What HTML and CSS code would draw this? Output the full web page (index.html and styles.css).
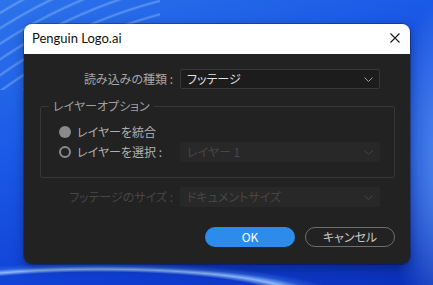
FILE: index.html
```html
<!DOCTYPE html>
<html lang="ja">
<head>
<meta charset="utf-8">
<link rel="stylesheet" href="styles.css">
</head>
<body>
<div class="desktop">
  <div class="dialog">
    <div class="titlebar">
      <span class="title">Penguin Logo.ai</span>
      <svg class="close" width="10" height="10" viewBox="0 0 10 10"><path d="M0.5 0.5 L9.5 9.5 M9.5 0.5 L0.5 9.5" stroke="#1a1a1a" stroke-width="1.1" fill="none"/></svg>
    </div>
    <div class="content">
      <div class="row">
        <span class="label">読み込みの種類 :</span>
        <div class="select">
          <span>フッテージ</span>
          <svg class="chev" width="9" height="5" viewBox="0 0 9 5"><path d="M0.5 0.5 L4.5 4.5 L8.5 0.5" stroke="#a0a0a0" stroke-width="1" fill="none"/></svg>
        </div>
      </div>
      <fieldset class="group">
        <legend>レイヤーオプション</legend>
        <div class="radio-row">
          <span class="radio filled"></span>
          <span class="rlabel">レイヤーを統合</span>
        </div>
        <div class="radio-row">
          <span class="radio ring"></span>
          <span class="rlabel wide">レイヤーを選択 :</span>
          <div class="select disabled">
            <span>レイヤー 1</span>
            <svg class="chev" width="9" height="5" viewBox="0 0 9 5"><path d="M0.5 0.5 L4.5 4.5 L8.5 0.5" stroke="#454545" stroke-width="1" fill="none"/></svg>
          </div>
        </div>
      </fieldset>
      <div class="row row3">
        <span class="label dim">フッテージのサイズ :</span>
        <div class="select disabled">
          <span>ドキュメントサイズ</span>
          <svg class="chev" width="9" height="5" viewBox="0 0 9 5"><path d="M0.5 0.5 L4.5 4.5 L8.5 0.5" stroke="#454545" stroke-width="1" fill="none"/></svg>
        </div>
      </div>
      <div class="buttons">
        <button class="btn ok">OK</button>
        <button class="btn cancel">キャンセル</button>
      </div>
    </div>
  </div>
</div>
</body>
</html>
```
FILE: styles.css
```css
html, body {
  margin: 0;
  padding: 0;
  width: 433px;
  height: 285px;
  overflow: hidden;
}
.desktop {
  width: 433px;
  height: 285px;
  padding: 24px 23px 0 24px;
  box-sizing: border-box;
  background:
    radial-gradient(ellipse 250px 36px at 100px 298px, rgba(120,180,255,0) 72%, rgba(160,205,255,0.85) 80%, rgba(80,140,240,0.35) 88%, rgba(80,140,240,0) 97%),
    radial-gradient(ellipse 90px 180px at 470px 165px, rgba(130,195,255,0.8), rgba(60,140,245,0) 100%),
    repeating-radial-gradient(circle at 284px 477px, rgba(255,255,255,0) 0px, rgba(255,255,255,0) 9px, rgba(170,210,255,0.4) 11px, rgba(255,255,255,0) 13px),
    linear-gradient(160deg, #2d73ea 0%, #1b5ae6 35%, #0f3fd4 70%, #0a2fb8 100%);
  background-size: 100% 100%, 100% 100%, 160px 90px, 100% 100%;
  background-repeat: no-repeat;
  font-family: "Noto Sans CJK JP", "Noto Sans", sans-serif;
}
.dialog {
  width: 386px;
  height: 240px;
  border-radius: 8px;
  overflow: hidden;
  display: flex;
  flex-direction: column;
  box-shadow: 0 0 0 1px rgba(0,0,0,0.25), 0 4px 12px rgba(0,0,0,0.35);
}
.titlebar {
  height: 30px;
  background: #ffffff;
  display: flex;
  align-items: center;
  justify-content: space-between;
  padding: 0 10px 0 8px;
  flex-shrink: 0;
}
.title {
  font-family: "Lato", "Noto Sans", sans-serif;
  font-size: 13px;
  color: #111;
  position: relative;
  top: -1px;
}
.close {
  display: block;
  position: relative;
  top: -1px;
}
.content {
  flex: 1;
  background: #222222;
  padding: 15px 15px 0 16px;
  font-size: 12px;
  font-feature-settings: "palt";
}
.row {
  display: flex;
  align-items: center;
  height: 20px;
}
.label {
  width: 133px;
  margin-right: 7px;
  text-align: right;
  color: #a6a6a6;
  white-space: nowrap;
  line-height: 20px;
}
.label.dim { color: #474747; }
.select {
  width: 200px;
  height: 20px;
  box-sizing: border-box;
  background: #1c1c1c;
  border: 1px solid #383838;
  border-radius: 2px;
  display: flex;
  align-items: center;
  justify-content: space-between;
  padding: 0 6px 0 6px;
  color: #e2e2e2;
  line-height: 18px;
}
.select .chev { display: block; margin-top: 1px; }
.select.disabled {
  background: #282828;
  border-color: #282828;
  color: #474747;
}
.group {
  margin: 10px 0 0 0;
  width: 355px;
  box-sizing: border-box;
  border: 1px solid #383838;
  border-radius: 2px;
  padding: 9px 14px 15px 18px;
}
.group legend {
  padding: 0 4px;
  margin-left: -10px;
  color: #a0a0a0;
  line-height: 14px;
}
.radio-row {
  display: flex;
  align-items: center;
  height: 20px;
}
.radio {
  width: 12px;
  height: 12px;
  border-radius: 50%;
  box-sizing: border-box;
  margin-right: 6px;
  flex-shrink: 0;
}
.radio.filled { background: #8a8a8a; }
.radio.ring { border: 2px solid #8a8a8a; background: #232323; }
.rlabel {
  color: #b0b0b0;
  white-space: nowrap;
  line-height: 20px;
}
.rlabel.wide { width: 103px; }
.row3 { margin-top: 9px; }
.buttons {
  display: flex;
  justify-content: flex-end;
  gap: 10px;
  margin-top: 20px;
}
.btn {
  width: 90px;
  height: 20px;
  box-sizing: border-box;
  border-radius: 10px;
  font-family: "Noto Sans CJK JP", "Noto Sans", sans-serif;
  font-feature-settings: "palt";
  font-size: 12px;
  line-height: 16px;
  padding: 0;
}
.btn.ok {
  background: #2d8ceb;
  border: none;
  color: #ffffff;
}
.btn.cancel {
  background: transparent;
  border: 1.5px solid #6e6e6e;
  color: #c6c6c6;
}
```
